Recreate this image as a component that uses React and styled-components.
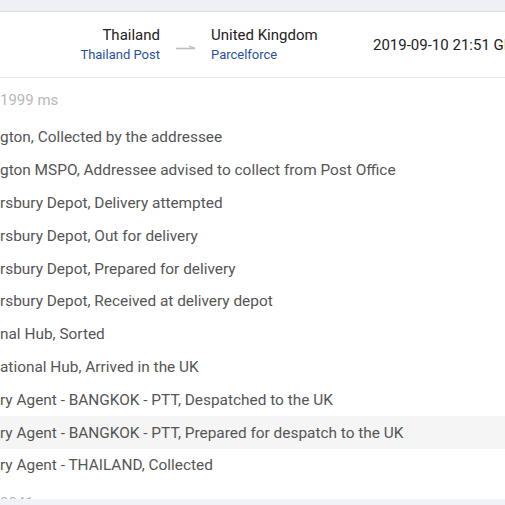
import React from "react";
import styled, { createGlobalStyle } from "styled-components";

const GlobalStyle = createGlobalStyle`
  html, body {
    margin: 0;
    padding: 0;
    background: #ffffff;
    overflow: hidden;
  }
  body {
    font-family: Roboto, "Liberation Sans", Arial, sans-serif;
    -webkit-font-smoothing: antialiased;
  }
`;

const events = [
  "gton, Collected by the addressee",
  "gton MSPO, Addressee advised to collect from Post Office",
  "rsbury Depot, Delivery attempted",
  "rsbury Depot, Out for delivery",
  "rsbury Depot, Prepared for delivery",
  "rsbury Depot, Received at delivery depot",
  "nal Hub, Sorted",
  "ational Hub, Arrived in the UK",
  "ry Agent - BANGKOK - PTT, Despatched to the UK",
  "ry Agent - BANGKOK - PTT, Prepared for despatch to the UK",
  "ry Agent - THAILAND, Collected",
];

const Arrow = () => (
  <svg width="22" height="8" viewBox="0 0 22 8">
    <path d="M1 5.5 H20" stroke="#bdbdbd" strokeWidth="1.6" fill="none" />
    <path d="M14 3.2 L20 5.5" stroke="#bdbdbd" strokeWidth="1.4" fill="none" />
  </svg>
);

const App = () => {
  return (
    <Page>
      <GlobalStyle />
      <TopStrip />
      <Shipment>
        <Origin>
          <Country>Thailand</Country>
          <Carrier>Thailand Post</Carrier>
        </Origin>
        <ArrowCell>
          <Arrow />
        </ArrowCell>
        <Destination>
          <Country>United Kingdom</Country>
          <Carrier>Parcelforce</Carrier>
        </Destination>
        <Stamp>2019-09-10 21:51 GMT+7</Stamp>
      </Shipment>
      <Timing>1999 ms</Timing>
      <EventList>
        {events.map((text, i) => (
          <EventRow key={i} $active={i === 9}>
            {text}
          </EventRow>
        ))}
      </EventList>
      <Timing>2041 ms</Timing>
      <Footer />
    </Page>
  );
};

const Page = styled.div`
  width: 505px;
  height: 505px;
  overflow: hidden;
`;

const TopStrip = styled.div`
  height: 11px;
  background: #eff0f6;
  border-bottom: 1px solid #dcdde3;
`;

const Shipment = styled.div`
  display: grid;
  grid-template-columns: 160px 51px 162px max-content;
  align-items: center;
  height: 65px;
  border-bottom: 1px solid #e4e4e4;
  white-space: nowrap;
`;

const Origin = styled.div`
  display: flex;
  flex-direction: column;
  align-items: flex-end;
  padding-top: 1px;
`;

const Destination = styled.div`
  display: flex;
  flex-direction: column;
  align-items: flex-start;
  padding-top: 1px;
`;

const Country = styled.span`
  font-size: 15px;
  line-height: 19px;
  color: #222222;
`;

const Carrier = styled.span`
  font-size: 13px;
  line-height: 20px;
  color: #2b4f9f;
`;

const ArrowCell = styled.div`
  display: flex;
  justify-content: center;
  padding-top: 4px;
`;

const Stamp = styled.div`
  font-size: 15px;
  color: #222222;
  padding-top: 1px;
`;

const Timing = styled.div`
  height: 43px;
  display: flex;
  align-items: center;
  font-size: 15px;
  color: #b8b8b8;
  white-space: nowrap;
`;

const EventList = styled.div`
  display: flex;
  flex-direction: column;
`;

const EventRow = styled.div`
  height: 32.8px;
  display: flex;
  align-items: center;
  font-size: 15.4px;
  color: #555555;
  white-space: nowrap;
  background: ${(p) => (p.$active ? "#f5f5f5" : "transparent")};
`;

const Footer = styled.div`
  position: fixed;
  left: 0;
  right: 0;
  bottom: 0;
  height: 6px;
  background: #f0f2f7;
`;

export default App;
